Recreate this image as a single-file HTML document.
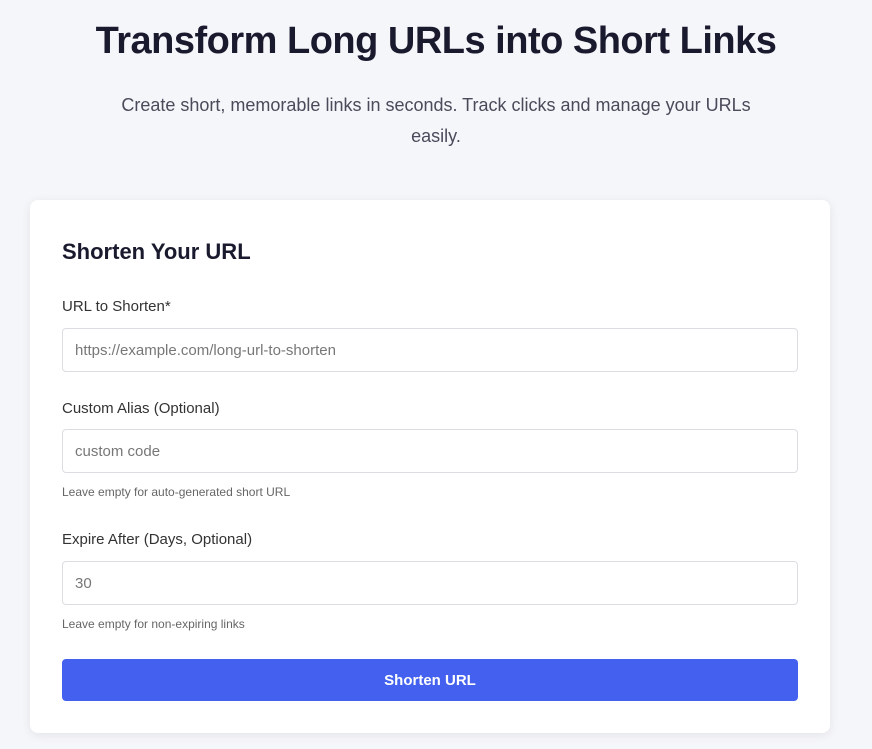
<!DOCTYPE html>
<html><head><meta charset="utf-8"><style>
*{box-sizing:border-box;margin:0;padding:0}
body{width:872px;height:749px;background:#f5f6fa;font-family:"Liberation Sans",sans-serif;color:#1a1a2e;overflow:hidden;position:relative}
h1{position:absolute;top:20px;left:0;width:872px;text-align:center;font-size:38px;font-weight:700;color:#1a1a2e;letter-spacing:-0.5px}
.sub{position:absolute;top:90px;left:96px;width:680px;text-align:center;font-size:18px;line-height:31px;color:#4a4a5a}
.card{position:absolute;left:30px;top:200px;width:800px;height:533px;background:#fff;border-radius:8px;box-shadow:0 2px 10px rgba(0,0,0,0.08)}
h2{position:absolute;left:32px;top:39px;font-size:22px;font-weight:700;color:#1a1a2e}
.lbl{position:absolute;left:32px;font-size:15px;color:#333}
.in{position:absolute;left:32px;width:736px;height:44px;border:1px solid #dcdde2;border-radius:4px;padding-left:12px;line-height:44px;font-size:15px;color:#777}
.hint{position:absolute;left:32px;font-size:12px;color:#666}
.btn{position:absolute;left:32px;top:459px;width:736px;height:42px;background:#4361ee;border-radius:4px;color:#fff;font-size:15px;font-weight:700;text-align:center;line-height:44px}
</style></head><body>
<h1>Transform Long URLs into Short Links</h1>
<div class="sub">Create short, memorable links in seconds. Track clicks and manage your URLs easily.</div>
<div class="card">
<h2>Shorten Your URL</h2>
<div class="lbl" style="top:98px">URL to Shorten*</div>
<div class="in" style="top:128px">https://example.com/long-url-to-shorten</div>
<div class="lbl" style="top:200px">Custom Alias (Optional)</div>
<div class="in" style="top:229px">custom code</div>
<div class="hint" style="top:285px">Leave empty for auto-generated short URL</div>
<div class="lbl" style="top:331px">Expire After (Days, Optional)</div>
<div class="in" style="top:361px">30</div>
<div class="hint" style="top:417px">Leave empty for non-expiring links</div>
<div class="btn">Shorten URL</div>
</div>
</body></html>
